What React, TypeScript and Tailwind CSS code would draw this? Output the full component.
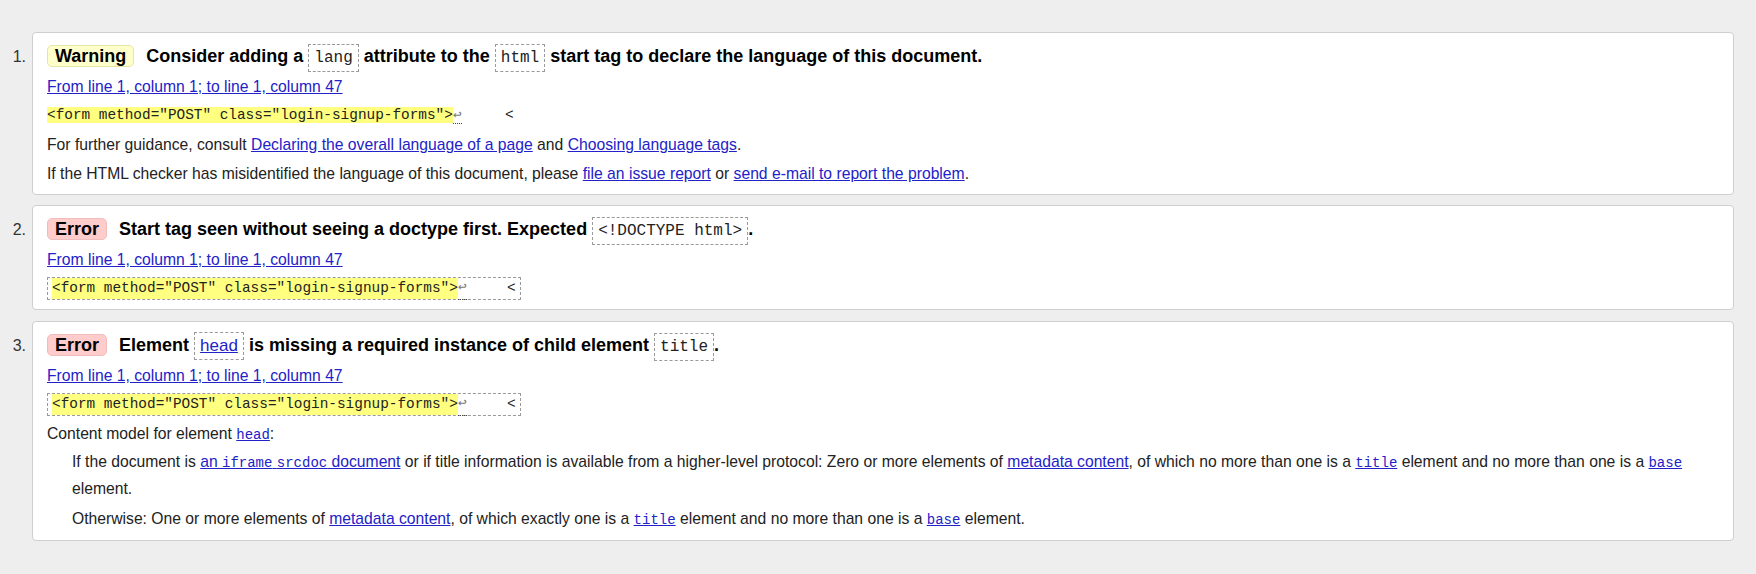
import React from "react";

const mono = "font-['Liberation_Mono','DejaVu_Sans_Mono',monospace]";
const link = "text-[#2222c8] underline";
const prose = `text-[14px] leading-[14px] ${mono}`;

const Code = ({ children }: { children: React.ReactNode }) => (
	<code
		className={`inline-block h-[28px] border border-dashed border-[#9a9a9a] px-[5px] align-baseline text-[16px] leading-[26px] font-normal text-[#222] ${mono}`}
	>
		{children}
	</code>
);

const Badge = ({ kind }: { kind: "Warning" | "Error" }) => (
	<span
		className={`mr-[12px] inline-block rounded-[5px] border px-[7px] text-[18px] leading-[20px] font-bold text-black ${
			kind === "Warning"
				? "border-[#e4e4a8] bg-[#ffffcc]"
				: "border-[#f0bcbc] bg-[#ffcccc]"
		}`}
	>
		{kind}
	</span>
);

const Extract = ({ boxed }: { boxed?: boolean }) => {
	const inner = (
		<>
			<span className="bg-[#ffff80]">{'<form method="POST" class="login-signup-forms">'}</span>
			<span className="border-b border-dotted border-[#444] text-[#777]">↩</span>
			<span className="whitespace-pre">{"    "}</span>
			<span className={boxed ? "ml-[6px]" : "ml-[9px]"}>&lt;</span>
		</>
	);
	return (
		<div className="flex h-[29px] items-center">
			{boxed ? (
				<span
					className={`inline-flex h-[23px] items-center border border-dashed border-[#9a9a9a] px-[4px] text-[14.4px] text-[#222] ${mono}`}
				>
					{inner}
				</span>
			) : (
				<span className={`text-[14.4px] text-[#222] ${mono}`}>{inner}</span>
			)}
		</div>
	);
};

const Location = () => (
	<div className="h-[29px] leading-[29px]">
		<a className={link}>From line 1, column 1; to line 1, column 47</a>
	</div>
);

const Message = ({
	n,
	title,
	children,
	pb = "pb-[6px]",
	className = "",
}: {
	n: number;
	title: React.ReactNode;
	children: React.ReactNode;
	pb?: string;
	className?: string;
}) => (
	<li className={`flex ${className}`}>
		<span className="mt-[9px] w-[32px] shrink-0 pr-[6px] text-right text-[16px] leading-[31px] text-[#333]">
			{n}.
		</span>
		<div
			className={`flex-1 rounded-[4px] border border-[#cfcfcf] bg-white px-[14px] pt-[8px] ${pb}`}
		>
			<div className="h-[31px] text-[18px] leading-[31px] font-bold text-black">
				{title}
			</div>
			{children}
		</div>
	</li>
);

export default function App() {
	return (
		<div className="min-h-screen bg-[#eeeeee] pt-[32px] pr-[22px] pb-[30px] font-['Liberation_Sans',Arial,sans-serif] text-[15.7px] text-[#222]">
			<ol className="flex flex-col gap-[10px]">
				<Message
					n={1}
					title={
						<>
							<Badge kind="Warning" />
							Consider adding a <Code>lang</Code> attribute to the{" "}
							<Code>html</Code> start tag to declare the language of this
							document.
						</>
					}
				>
					<Location />
					<Extract />
					<p className="h-[29px] leading-[29px]">
						For further guidance, consult{" "}
						<a className={link}>Declaring the overall language of a page</a>{" "}
						and <a className={link}>Choosing language tags</a>.
					</p>
					<p className="h-[29px] leading-[29px]">
						If the HTML checker has misidentified the language of this
						document, please <a className={link}>file an issue report</a> or{" "}
						<a className={link}>send e-mail to report the problem</a>.
					</p>
				</Message>

				<Message
					n={2}
					title={
						<>
							<Badge kind="Error" />
							Start tag seen without seeing a doctype first. Expected{" "}
							<Code>&lt;!DOCTYPE html&gt;</Code>.
						</>
					}
				>
					<Location />
					<Extract boxed />
				</Message>

				<Message
					n={3}
					pb="pb-[8px]"
					className="mt-px"
					title={
						<>
							<Badge kind="Error" />
							Element{" "}
							<span className="inline-block h-[28px] border border-dashed border-[#9a9a9a] px-[5px] align-baseline text-[17px] leading-[26px] font-normal">
								<a className={link}>head</a>
							</span>{" "}
							is missing a required instance of child element{" "}
							<Code>title</Code>.
						</>
					}
				>
					<Location />
					<Extract boxed />
					<p className="h-[29px] leading-[29px]">
						Content model for element{" "}
						<a className={link}>
							<code className={prose}>head</code>
						</a>
						:
					</p>
					<div className="pl-[25px]">
						<p className="leading-[27px]">
							If the document is{" "}
							<a className={link}>
								an <code className={prose}>iframe</code>{" "}
								<code className={prose}>srcdoc</code> document
							</a>{" "}
							or if title information is available from a higher-level
							protocol: Zero or more elements of{" "}
							<a className={link}>metadata content</a>, of which no more than
							one is a{" "}
							<a className={link}>
								<code className={prose}>title</code>
							</a>{" "}
							element and no more than one is a{" "}
							<a className={link}>
								<code className={prose}>base</code>
							</a>{" "}
							element.
						</p>
						<p className="mt-[3px] leading-[27px]">
							Otherwise: One or more elements of{" "}
							<a className={link}>metadata content</a>, of which exactly one is
							a{" "}
							<a className={link}>
								<code className={prose}>title</code>
							</a>{" "}
							element and no more than one is a{" "}
							<a className={link}>
								<code className={prose}>base</code>
							</a>{" "}
							element.
						</p>
					</div>
				</Message>
			</ol>
		</div>
	);
}
